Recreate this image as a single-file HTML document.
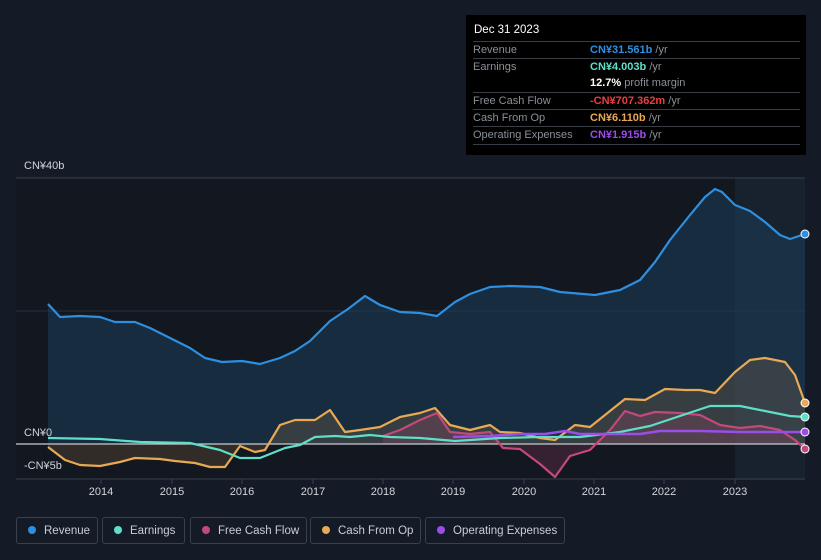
<!DOCTYPE html>
<html><head><meta charset="utf-8"><style>
body{margin:0;width:821px;height:560px;background:#151b26;font-family:"Liberation Sans",sans-serif;position:relative;overflow:hidden}
.tt{position:absolute;left:466px;top:15px;width:340px;height:140px;background:#000;font-size:11px;color:#8a8f98}
.tt .d{position:absolute;left:8px;top:9px;color:#fff;font-size:11.5px}
.row{position:absolute;left:7px;width:327px;height:17px;line-height:17px;border-top:1px solid #3a3d44}
.row span{position:absolute;left:117px}
b{font-weight:bold}
.lg{position:absolute;top:517px;height:27px;border:1px solid #3a404c;border-radius:3px;color:#c8ccd4;font-size:11.5px;line-height:27px;box-sizing:border-box}
.lg i{display:inline-block;width:8px;height:8px;border-radius:50%;margin:0 8px 0 11px;vertical-align:-0px}
.ax{position:absolute;color:#d0d4da;font-size:11px}
</style></head><body>
<svg width="821" height="560" style="position:absolute;left:0;top:0">
<rect x="16" y="178" width="719" height="302" fill="#121720"/>
<rect x="735" y="178" width="70" height="302" fill="#18212e"/>
<line x1="16" y1="178" x2="805" y2="178" stroke="#3a404c"/>
<line x1="16" y1="311" x2="805" y2="311" stroke="#2a303a"/>
<line x1="16" y1="479" x2="805" y2="479" stroke="#3a404c"/>
<path d="M48,304 L60,317 80,316 100,317 115,322 135,322 150,328 170,338 190,348 205,358 222,362 242,361 260,364 280,358 295,351 310,341 330,321 348,309 365,296 380,305 400,312 420,313 437,316 455,302 470,294 490,287 510,286 540,287 560,292 595,295 620,290 640,280 655,262 670,240 690,215 705,197 715,189 722,192 735,205 750,211 765,222 780,235 790,239 805,234 L805,444 L48,444Z" fill="#1a3a55" opacity="0.6"/>
<path d="M48,447 L65,460 80,465 100,466 120,462 135,458 160,459 175,461 195,463 210,467 225,467 240,446 255,452 265,450 280,425 295,420 315,420 330,410 345,432 360,430 380,427 400,417 420,413 435,408 450,425 470,430 490,425 500,432 520,433 540,438 555,440 575,425 590,427 605,415 625,399 645,400 665,389 685,390 700,390 715,393 735,372 750,360 765,358 785,362 795,375 805,403 L805,444 L48,444Z" fill="#e8a955" opacity="0.15"/>
<path d="M383,436 L400,430 420,420 437,413 450,432 470,434 490,432 503,448 520,449 540,464 555,477 570,456 590,450 610,430 625,411 640,416 655,412 680,413 700,415 710,420 720,425 740,428 760,426 780,430 795,440 805,449 L805,444 L383,444Z" fill="#c24a7a" opacity="0.2"/>
<line x1="16" y1="444" x2="805" y2="444" stroke="#c8ccd4" stroke-width="1.2"/>
<g fill="none" stroke-width="2.2" stroke-linejoin="round">
<path stroke="#2e8fe0" d="M48,304 L60,317 80,316 100,317 115,322 135,322 150,328 170,338 190,348 205,358 222,362 242,361 260,364 280,358 295,351 310,341 330,321 348,309 365,296 380,305 400,312 420,313 437,316 455,302 470,294 490,287 510,286 540,287 560,292 595,295 620,290 640,280 655,262 670,240 690,215 705,197 715,189 722,192 735,205 750,211 765,222 780,235 790,239 805,234"/>
<path stroke="#e8a955" d="M48,447 L65,460 80,465 100,466 120,462 135,458 160,459 175,461 195,463 210,467 225,467 240,446 255,452 265,450 280,425 295,420 315,420 330,410 345,432 360,430 380,427 400,417 420,413 435,408 450,425 470,430 490,425 500,432 520,433 540,438 555,440 575,425 590,427 605,415 625,399 645,400 665,389 685,390 700,390 715,393 735,372 750,360 765,358 785,362 795,375 805,403"/>
<path stroke="#c24a7a" d="M383,436 L400,430 420,420 437,413 450,432 470,434 490,432 503,448 520,449 540,464 555,477 570,456 590,450 610,430 625,411 640,416 655,412 680,413 700,415 710,420 720,425 740,428 760,426 780,430 795,440 805,449"/>
<path stroke="#5ee0c8" d="M48,438 L100,439 140,442 190,443 220,450 240,458 260,458 285,448 300,445 315,437 335,436 350,437 370,435 390,437 420,438 455,441 500,438 540,437 580,437 620,432 650,426 680,416 710,406 740,406 770,412 790,416 805,417"/>
<path stroke="#9b4de8" stroke-width="2.6" d="M453,437 L490,436 520,434 545,434 565,431 580,434 600,434 620,434 640,434 660,431 700,431 740,432 805,432"/>
</g>
<circle cx="805" cy="234" r="4" fill="#2e8fe0" stroke="#fff" stroke-width="1"/>
<circle cx="805" cy="417" r="4" fill="#5ee0c8" stroke="#fff" stroke-width="1"/>
<circle cx="805" cy="403" r="4" fill="#e8a955" stroke="#fff" stroke-width="1"/>
<circle cx="805" cy="432" r="4" fill="#9b4de8" stroke="#fff" stroke-width="1"/>
<circle cx="805" cy="449" r="4" fill="#c24a7a" stroke="#fff" stroke-width="1"/>
<g stroke="#3a404c"><line x1="101" y1="479" x2="101" y2="484"/><line x1="172" y1="479" x2="172" y2="484"/><line x1="242" y1="479" x2="242" y2="484"/><line x1="313" y1="479" x2="313" y2="484"/><line x1="383" y1="479" x2="383" y2="484"/><line x1="453" y1="479" x2="453" y2="484"/><line x1="524" y1="479" x2="524" y2="484"/><line x1="594" y1="479" x2="594" y2="484"/><line x1="664" y1="479" x2="664" y2="484"/><line x1="735" y1="479" x2="735" y2="484"/></g>
<g fill="#d0d4da" font-size="11" font-family="Liberation Sans" text-anchor="middle">
<text x="101" y="495">2014</text><text x="172" y="495">2015</text><text x="242" y="495">2016</text><text x="313" y="495">2017</text><text x="383" y="495">2018</text><text x="453" y="495">2019</text><text x="524" y="495">2020</text><text x="594" y="495">2021</text><text x="664" y="495">2022</text><text x="735" y="495">2023</text>
</g>
</svg>
<div class="ax" style="left:24px;top:160px">CN¥40b</div>
<div class="ax" style="left:24px;top:427px">CN¥0</div>
<div class="ax" style="left:24px;top:460px">-CN¥5b</div>
<div class="tt">
<div class="d">Dec 31 2023</div>
<div class="row" style="top:26px">Revenue<span><b style="color:#2e8fe0">CN¥31.561b</b> /yr</span></div>
<div class="row" style="top:43px">Earnings<span><b style="color:#5ee0c8">CN¥4.003b</b> /yr</span></div>
<div class="row" style="top:60px;border-top:none"><span><b style="color:#fff">12.7%</b> profit margin</span></div>
<div class="row" style="top:77px">Free Cash Flow<span><b style="color:#e84040">-CN¥707.362m</b> /yr</span></div>
<div class="row" style="top:94px">Cash From Op<span><b style="color:#e8a955">CN¥6.110b</b> /yr</span></div>
<div class="row" style="top:111px">Operating Expenses<span><b style="color:#9b4de8">CN¥1.915b</b> /yr</span></div>
<div class="row" style="top:129px;height:0"></div>
</div>
<div class="lg" style="left:16px;width:82px"><i style="background:#2e8fe0"></i>Revenue</div>
<div class="lg" style="left:102px;width:83px"><i style="background:#5ee0c8"></i>Earnings</div>
<div class="lg" style="left:190px;width:117px"><i style="background:#c24a7a"></i>Free Cash Flow</div>
<div class="lg" style="left:310px;width:111px"><i style="background:#e8a955"></i>Cash From Op</div>
<div class="lg" style="left:425px;width:140px"><i style="background:#9b4de8"></i>Operating Expenses</div>
</body></html>
